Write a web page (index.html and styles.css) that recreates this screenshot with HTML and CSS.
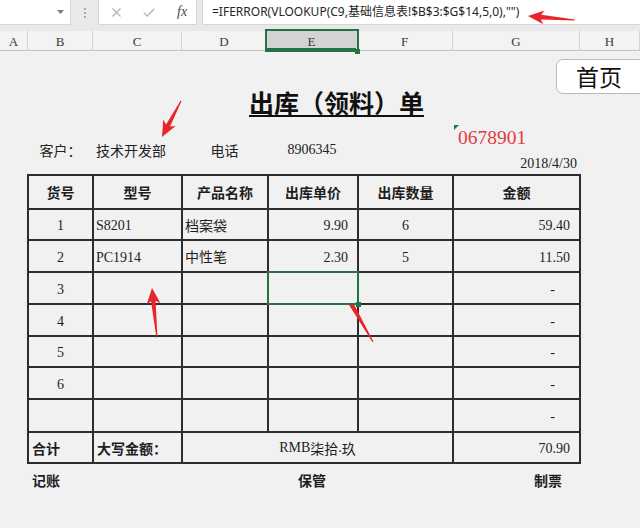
FILE: index.html
```html
<!DOCTYPE html>
<html lang="zh-CN">
<head>
<meta charset="utf-8">
<title>出库（领料）单</title>
<link rel="stylesheet" href="styles.css">
</head>
<body>
<div class="app">
  <div class="toolbar">
    <div class="namebox">
      <svg class="dd" width="7" height="4" viewBox="0 0 7 4"><path d="M0 0h7L3.5 4z" fill="#7a7a7a"/></svg>
    </div>
    <div class="grip"><i></i><i></i><i></i></div>
    <div class="fbtns">
      <svg class="ic-x" width="9" height="9" viewBox="0 0 9 9"><path d="M0.5 0.5L8.5 8.5M8.5 0.5L0.5 8.5" stroke="#b4b4b4" stroke-width="1.3" fill="none"/></svg>
      <svg class="ic-ok" width="12" height="9" viewBox="0 0 12 9"><path d="M0.7 4.6L4.2 8L11.3 0.7" stroke="#b4b4b4" stroke-width="1.3" fill="none"/></svg>
      <span class="fx">fx</span>
    </div>
    <div class="finput">=IFERROR(VLOOKUP(C9,基础信息表!$B$3:$G$14,5,0),"")</div>
  </div>

  <div class="colheads">
    <div class="ch">A</div>
    <div class="ch">B</div>
    <div class="ch">C</div>
    <div class="ch">D</div>
    <div class="ch sel">E</div>
    <div class="ch">F</div>
    <div class="ch">G</div>
    <div class="ch">H</div>
  </div>

  <div class="sheet">
    <div class="top">
      <div class="home">首页</div>
      <div class="titlecell"><h1 class="title">出库（领料）单</h1></div>
      <div class="cust lab">客户：</div>
      <div class="cust val">技术开发部</div>
      <div class="cust tel">电话</div>
      <div class="cust phone num">8906345</div>
      <div class="code"><span class="codenum">0678901</span></div>
      <div class="date num">2018/4/30</div>
    </div>

    <div class="tbl">
      <div class="c ctr b">货号</div>
      <div class="c ctr b">型号</div>
      <div class="c ctr b">产品名称</div>
      <div class="c ctr b">出库单价</div>
      <div class="c ctr b">出库数量</div>
      <div class="c ctr b">金额</div>

      <div class="c ctr num">1</div>
      <div class="c l num">S8201</div>
      <div class="c l">档案袋</div>
      <div class="c r num">9.90</div>
      <div class="c ctr num">6</div>
      <div class="c r num">59.40</div>

      <div class="c ctr num">2</div>
      <div class="c l num">PC1914</div>
      <div class="c l">中性笔</div>
      <div class="c r num">2.30</div>
      <div class="c ctr num">5</div>
      <div class="c r num">11.50</div>

      <div class="c ctr num">3</div>
      <div class="c"></div>
      <div class="c"></div>
      <div class="c sel"></div>
      <div class="c"></div>
      <div class="c dash num">-</div>

      <div class="c ctr num">4</div>
      <div class="c"></div>
      <div class="c"></div>
      <div class="c"></div>
      <div class="c"></div>
      <div class="c dash num">-</div>

      <div class="c ctr num">5</div>
      <div class="c"></div>
      <div class="c"></div>
      <div class="c"></div>
      <div class="c"></div>
      <div class="c dash num">-</div>

      <div class="c ctr num">6</div>
      <div class="c"></div>
      <div class="c"></div>
      <div class="c"></div>
      <div class="c"></div>
      <div class="c dash num">-</div>

      <div class="c"></div>
      <div class="c"></div>
      <div class="c"></div>
      <div class="c"></div>
      <div class="c"></div>
      <div class="c dash num">-</div>

      <div class="c l b tot">合计</div>
      <div class="c l b tot">大写金额：</div>
      <div class="c ctr span3"><span class="num">RMB</span>柒拾<span class="num">.</span>玖</div>
      <div class="c r num">70.90</div>
    </div>

    <div class="foot">
      <div class="f1">记账</div>
      <div class="f2">保管</div>
      <div class="f3">制票</div>
    </div>
  </div>

  <svg class="arrows" width="640" height="528" viewBox="0 0 640 528">
    <polygon transform="translate(528 16) rotate(4.9)" points="0,0 16,-7 13,-2.3 47,-0.5 47,0.5 13,2.3 16,7" fill="#e8252b"/>
    <polygon transform="translate(162 137) rotate(-62.2)" points="0,0 16,-7 13,-2.3 41,-0.5 41,0.5 13,2.3 16,7" fill="#e8252b"/>
    <polygon transform="translate(152 288) rotate(84.3)" points="0,0 16,-7 13,-2.3 50,-0.5 50,0.5 13,2.3 16,7" fill="#e8252b"/>
    <polygon transform="translate(342 288) rotate(60.1)" points="0,0 16,-7 13,-2.6 62,-0.6 62,0.6 13,2.6 16,7" fill="#e8252b"/>
  </svg>
</div>
</body>
</html>
```

FILE: styles.css
```css
* { box-sizing: border-box; margin: 0; padding: 0; }

html, body {
  width: 640px;
  height: 528px;
  overflow: hidden;
}

body {
  font-family: "Noto Sans CJK SC", "Noto Sans", sans-serif;
  color: #1e1e1e;
  background: #f1f1f1;
}

.app {
  position: relative;
  width: 640px;
  height: 528px;
}

/* ---------- formula bar ---------- */
.toolbar {
  height: 31px;
  background: #e9e9e9;
  display: flex;
  align-items: flex-start;
}

.namebox {
  width: 71px;
  height: 25px;
  background: #fff;
  border-right: 1px solid #d6d6d6;
  border-bottom: 1px solid #d6d6d6;
  display: flex;
  align-items: center;
  justify-content: flex-end;
  padding-right: 6px;
}

.grip {
  width: 27px;
  height: 25px;
  display: flex;
  flex-direction: column;
  align-items: center;
  justify-content: center;
  gap: 2px;
}

.grip i {
  display: block;
  width: 2px;
  height: 2px;
  background: #a9a9a9;
}

.fbtns {
  width: 99px;
  height: 25px;
  background: #fff;
  border: 1px solid #d6d6d6;
  border-top: 0;
  display: flex;
  align-items: center;
  padding-left: 13px;
}

.ic-ok { margin-left: 22px; }

.fx {
  margin-left: 22px;
  font-family: "Liberation Serif", serif;
  font-style: italic;
  font-size: 14px;
  color: #4a4a4a;
}

.finput {
  margin-left: 5px;
  flex: 1;
  height: 25px;
  background: #fff;
  border-left: 1px solid #d6d6d6;
  border-bottom: 1px solid #d6d6d6;
  font-family: "Noto Sans", "Noto Sans CJK SC", sans-serif;
  font-size: 12px;
  line-height: 24px;
  padding-left: 9px;
  color: #262626;
  white-space: nowrap;
}

/* ---------- column headers ---------- */
.colheads {
  display: grid;
  grid-template-columns: 28px 65px 89px 85px 90px 96px 127px 60px;
  height: 20px;
  background: #f3f3f3;
  border-bottom: 1px solid #c4c4c4;
}

.ch {
  border-right: 1px solid #d4d4d4;
  text-align: center;
  font-family: "Liberation Serif", serif;
  font-size: 13px;
  line-height: 17px;
  padding-top: 2px;
  color: #3a3a3a;
}

.ch.sel {
  background: #d3d3d3;
  box-shadow: inset 0 -2px 0 #217346;
}

/* ---------- sheet ---------- */
.sheet {
  background: #f1f1f1;
}

.num {
  font-family: "Liberation Serif", serif;
  font-size: 14px;
}

.top {
  display: grid;
  grid-template-columns: 28px 65px 89px 85px 90px 96px 127px 60px;
  grid-template-rows: 33px 40px 34px 16px;
  font-size: 14px;
}

.home {
  grid-column: 7 / 9;
  grid-row: 1 / 3;
  justify-self: end;
  align-self: start;
  margin-top: 8px;
  margin-right: -6px;
  width: 90px;
  height: 35px;
  background: #fff;
  border: 1px solid #b9b9b9;
  border-radius: 7px;
  font-size: 23px;
  line-height: 32px;
  padding-left: 19px;
  color: #111;
}

.titlecell {
  grid-column: 3 / 8;
  grid-row: 2;
  text-align: center;
}

.title {
  display: inline-block;
  margin-top: 5px;
  font-size: 25px;
  font-weight: 700;
  line-height: 26px;
  border-bottom: 2px solid #111;
  color: #111;
}

.cust {
  grid-row: 3;
  align-self: end;
  line-height: 16px;
  color: #222;
}

.cust.lab { grid-column: 2; text-align: center; }
.cust.val { grid-column: 3; padding-left: 3px; }
.cust.tel { grid-column: 4; text-align: center; }
.cust.phone { grid-column: 5; text-align: center; }

.code {
  grid-column: 7;
  grid-row: 3;
  position: relative;
  padding-top: 4px;
  padding-left: 5px;
}

.code::before {
  content: "";
  position: absolute;
  top: 1px;
  left: 1px;
  border-top: 5px solid #1f7a3e;
  border-right: 5px solid transparent;
}

.codenum {
  font-family: "Liberation Serif", serif;
  font-size: 19.5px;
  line-height: 20px;
  color: #e23a3f;
}

.date {
  grid-column: 7;
  grid-row: 4;
  justify-self: end;
  padding-right: 3px;
  line-height: 12px;
  color: #222;
}

/* ---------- table ---------- */
.tbl {
  margin-left: 27px;
  width: 554px;
  display: grid;
  grid-template-columns: 63px 87px 84px 88px 93px 125px;
  grid-template-rows: 32px 29px 30px 30px 30px 29px 30px 31px 29px;
  gap: 2px;
  padding: 2px;
  background: #2d2d2d;
}

.c {
  background: #f1f1f1;
  display: flex;
  align-items: center;
  font-size: 14px;
  line-height: 16px;
  white-space: nowrap;
  color: #1e1e1e;
}

.c.num { padding-top: 3px; }

.ctr { justify-content: center; }
.l { padding-left: 2px; }
.r { justify-content: flex-end; padding-right: 9px; }
.dash { justify-content: flex-end; padding-right: 24px; }
.b { font-weight: 700; }
.tot { padding-left: 3px; }
.span3 { grid-column: 3 / 6; }

.sel {
  position: relative;
  z-index: 1;
  outline: 2px solid #217346;
}

.sel::after {
  content: "";
  position: absolute;
  right: -4px;
  bottom: -4px;
  width: 5px;
  height: 5px;
  background: #217346;
}

/* ---------- footer ---------- */
.foot {
  display: grid;
  grid-template-columns: 28px 65px 89px 85px 90px 96px 127px 60px;
  grid-template-rows: 36px;
  font-size: 14px;
  font-weight: 700;
  line-height: 20px;
}

.foot > div { margin-top: 6px; }
.f1 { grid-column: 2; padding-left: 4px; }
.f2 { grid-column: 5; text-align: center; }
.f3 { grid-column: 7; justify-self: end; padding-right: 18px; }

/* ---------- annotation arrows ---------- */
.arrows {
  position: absolute;
  top: 0;
  left: 0;
  pointer-events: none;
}
```
